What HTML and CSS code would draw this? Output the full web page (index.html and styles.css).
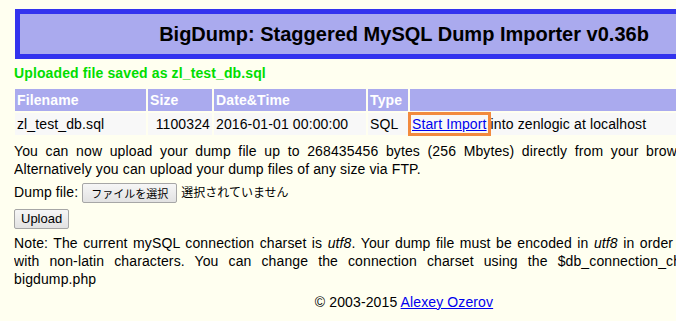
FILE: index.html
```html
<!DOCTYPE html>
<html>
<head>
<meta charset="utf-8">
<title>BigDump</title>
<link rel="stylesheet" href="styles.css">
</head>
<body>
<div class="page">
  <div class="skin1">
    <h1>BigDump: Staggered MySQL Dump Importer v0.36b</h1>
  </div>
  <p class="success">Uploaded file saved as zl_test_db.sql</p>
  <table class="files">
    <tr>
      <th class="c-name">Filename</th>
      <th class="c-size">Size</th>
      <th class="c-date">Date&amp;Time</th>
      <th class="c-type">Type</th>
      <th class="c-link">&nbsp;</th>
      <th class="c-del">&nbsp;</th>
    </tr>
    <tr>
      <td>zl_test_db.sql</td>
      <td class="right">1100324</td>
      <td>2016-01-01 00:00:00</td>
      <td>SQL</td>
      <td><a href="#" class="focus">Start Import</a> into zenlogic at localhost</td>
      <td><a href="#">Delete file</a></td>
    </tr>
  </table>
  <p>You can now upload your dump file up to 268435456 bytes (256 Mbytes) directly from your browser to the server. Alternatively you can upload your dump files of any size via FTP.</p>
  <form class="upload">
    <p>Dump file: <button type="button" class="btn filebtn">ファイルを選択</button> <span class="nofile">選択されていません</span></p>
    <p><button type="button" class="btn">Upload</button></p>
  </form>
  <p>Note: The current mySQL connection charset is <i>utf8</i>. Your dump file must be encoded in <i>utf8</i> in order to avoid problems with non-latin characters. You can change the connection charset using the $db_connection_charset variable in bigdump.php</p>
  <p class="centr">&copy; 2003-2015 <a href="#">Alexey Ozerov</a></p>
</div>
</body>
</html>
```

FILE: styles.css
```css
html {
  overflow: hidden;
}
body {
  margin: 8px 0 0 14px;
  background-color: #FFFFF0;
  font-family: "Liberation Sans", Arial, sans-serif;
  color: #000;
}
.page {
  width: 780px;
}
h1 {
  font-size: 20px;
  line-height: 24px;
  font-family: "Liberation Sans", Arial, sans-serif;
  margin: 5px 0;
}
p, td, th {
  font-size: 14px;
  line-height: 18px;
  letter-spacing: 0.12px;
  font-family: "Liberation Sans", Arial, sans-serif;
  text-align: justify;
  vertical-align: top;
}
p {
  margin: 5px 0;
}
.centr {
  text-align: center;
}
.success {
  color: #00DD00;
  font-weight: bold;
}
.skin1 {
  border: 5px solid #3333EE;
  background-color: #AAAAEE;
  text-align: center;
  padding: 3px;
  margin: 1px;
}
.skin1 h1 {
  text-align: center;
}
.files {
  width: 780px;
  border-spacing: 2px;
  table-layout: fixed;
  margin-left: -1px;
}
.files th, .files td {
  padding: 2px;
}
.files th {
  font-weight: bold;
  color: #FFFFFF;
  background-color: #AAAAEE;
  text-align: left;
}
.files td {
  background-color: #F8F8F8;
  text-align: left;
  white-space: nowrap;
}
.files td.right {
  text-align: right;
}
.c-name { width: 127px; }
.c-size { width: 60px; }
.c-date { width: 148px; }
.c-type { width: 36px; }
.c-link { width: 280px; }
a {
  color: #0000EE;
}
a.focus {
  outline: 3px solid #F28A3E;
  outline-offset: 1px;
}
form {
  margin: 5px 0;
}
.btn {
  font-family: "Liberation Sans", Arial, sans-serif;
  font-size: 13px;
  line-height: 16px;
  letter-spacing: 0;
  padding: 1px 6px;
  margin: 0;
  border: 1px solid #A6A6A6;
  border-radius: 2px;
  background: linear-gradient(#F6F6F6, #E2E2E2);
  color: #000;
  vertical-align: middle;
}
.filebtn {
  font-family: "Noto Sans CJK JP", sans-serif;
  font-size: 11px;
  line-height: 16px;
  padding: 1px 8px;
}
.nofile {
  font-family: "Noto Sans CJK JP", sans-serif;
  font-size: 12px;
  letter-spacing: 0;
}
```
